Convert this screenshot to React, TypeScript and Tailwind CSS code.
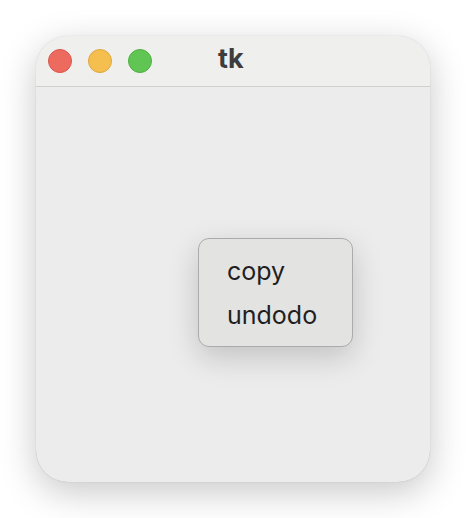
export default function App() {
    return (
        <div className="w-[466px] h-[518px] bg-white p-[36px]" style={{ fontFamily: 'Inter, "Liberation Sans", sans-serif' }}>
            <div className="relative flex h-[446px] w-[394px] flex-col overflow-hidden rounded-[32px] bg-[#ececec] shadow-[0_10px_36px_rgba(0,0,0,0.22),0_0_1px_rgba(0,0,0,0.25)]">
                <div className="relative flex h-[51px] shrink-0 items-center border-b border-[#cfcfcf] bg-[#efefee] px-[12px]">
                    <div className="flex gap-[16px]">
                        <span className="h-[24px] w-[24px] rounded-full border border-[#d9564c] bg-[#ec6a5e]" />
                        <span className="h-[24px] w-[24px] rounded-full border border-[#dea53b] bg-[#f5bf4f]" />
                        <span className="h-[24px] w-[24px] rounded-full border border-[#4faf3f] bg-[#61c554]" />
                    </div>
                    <div className="absolute left-[182px] top-[6px] text-[27px] font-bold leading-[34px] text-[#3d3d3d]">tk</div>
                </div>
                <div className="relative flex-1">
                    <div className="absolute left-[162px] top-[151px] flex h-[109px] w-[155px] flex-col rounded-[11px] border border-[#ababab] bg-[#e3e3e2] pl-[28px] pt-[10px] text-[25px] leading-[44px] text-[#1f1f1f] shadow-[0_10px_30px_rgba(0,0,0,0.18)]">
                        <span>copy</span>
                        <span>undodo</span>
                    </div>
                </div>
            </div>
        </div>
    );
}
